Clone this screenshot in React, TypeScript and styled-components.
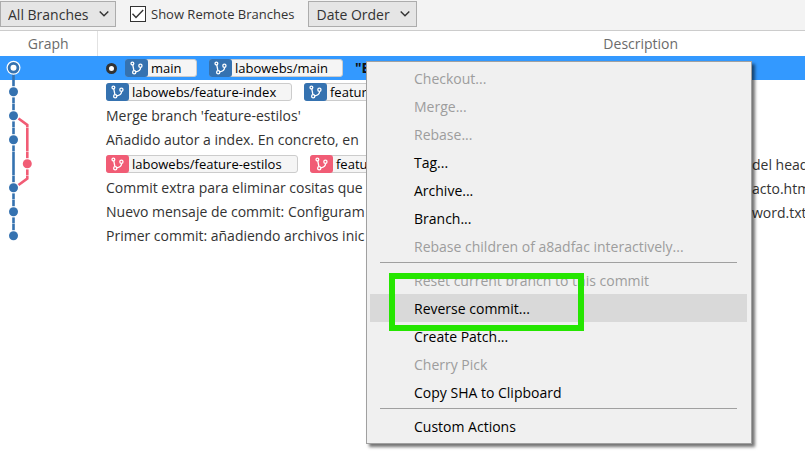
import React from "react";
import styled, { createGlobalStyle, css } from "styled-components";

const BLUE = "#3572b0";
const PINK = "#f15c75";

const GlobalStyle = createGlobalStyle`
  * { box-sizing: border-box; }
  body {
    margin: 0;
    background: #fff;
    color: #333;
    font: 14px/20px "Open Sans", "Noto Sans", sans-serif;
    overflow: hidden;
  }
  button, select, input { font: inherit; }
`;

const Page = styled.main`
  position: relative;
  min-height: 100vh;
`;

const Toolbar = styled.header`
  display: flex;
  align-items: center;
  height: 31px;
  padding-bottom: 2px;
  background: #f3f3f3;
  border-bottom: 1px solid #ccc;
`;

const SelectBox = styled.div<{ $width: number }>`
  position: relative;
  width: ${(p) => p.$width}px;
  height: 26px;

  svg {
    position: absolute;
    right: 7px;
    top: 9px;
    pointer-events: none;
  }
`;

const Select = styled.select`
  appearance: none;
  width: 100%;
  height: 100%;
  padding: 2px 0 0 7px;
  color: #333;
  background: #e5e5e5;
  border: 1px solid #acacac;
  border-radius: 0;
`;

const CheckLabel = styled.label`
  display: flex;
  align-items: center;
  gap: 5px;
  margin: 0 14px;
  font-size: 13px;
  white-space: nowrap;
`;

const CheckHolder = styled.span`
  display: grid;
  width: 16px;
  height: 16px;

  > * { grid-area: 1 / 1; }
  svg { pointer-events: none; visibility: hidden; }
  input:checked + svg { visibility: visible; }
`;

const Checkbox = styled.input`
  appearance: none;
  width: 16px;
  height: 16px;
  margin: 0;
  background: #fff;
  border: 1px solid #333;
`;

const LogViewport = styled.section`
  overflow: hidden;
`;

const Log = styled.table`
  width: 100%;
  min-width: 1184px;
  table-layout: fixed;
  border-collapse: collapse;
`;

const HeadCell = styled.th<{ $width?: number }>`
  width: ${(p) => (p.$width ? `${p.$width}px` : "auto")};
  height: 25px;
  padding: 0;
  color: #6b6b6b;
  font-weight: 400;
  line-height: 18px;
  text-align: center;

  & + & { border-left: 1px solid #e2e2e2; }
`;

const Row = styled.tr<{ $selected?: boolean }>`
  height: 24px;
  background: ${(p) => (p.$selected ? "#3399ff" : "#fff")};
`;

const Cell = styled.td`
  height: 24px;
  padding: 0;

  > svg { display: block; }
`;

const Description = styled.div`
  display: flex;
  height: 24px;
  padding-left: 9px;
  line-height: 26px;
  white-space: nowrap;
`;

const Lead = styled.div`
  display: flex;
  align-items: center;
  flex: none;
  gap: 12px;
  width: 646px;
  height: 24px;
`;

const Summary = styled.strong`
  color: #111;
`;

const Current = styled.span`
  flex: none;
  width: 11px;
  height: 11px;
  margin-right: -4px;
  border: 3px solid #333;
  border-radius: 50%;
  background: #fff;
`;

const Ref = styled.span<{ $color: string; $width: number }>`
  display: flex;
  align-items: center;
  flex: none;
  gap: 3px;
  width: ${(p) => p.$width}px;
  height: 18px;
  color: #000;
  font-size: 13px;
  line-height: 16px;
  background: #f5f5f5;
  border: 1px solid #ccc;
  border-radius: 3px;

  svg {
    flex: none;
    margin: -1px 0 -1px -1px;
    background: ${(p) => p.$color};
    border-radius: 3px;
  }
`;

const Menu = styled.div`
  position: absolute;
  top: 61px;
  left: 366px;
  width: 386px;
  padding: 2px 4px 3px 3px;
  background: #f0f0f0;
  border: 1px solid #a0a0a0;
  box-shadow: 3px 3px 3px rgba(0, 0, 0, 0.55);
`;

const MenuItem = styled.button<{ $active?: boolean }>`
  display: block;
  width: 100%;
  height: 28px;
  padding: 2px 0 0 44px;
  text-align: left;
  color: #000;
  background: none;
  border: 0;

  &:disabled { color: #9d9d9d; }
  ${(p) => p.$active && css`background: #d9d9d9;`}
`;

const Separator = styled.hr`
  height: 1px;
  margin: 2px 10px 3px;
  border: 0;
  background: #a0a0a0;
`;

const Highlight = styled.div`
  position: absolute;
  top: 273px;
  left: 389px;
  width: 195px;
  height: 58px;
  border: 6px solid #25e600;
  pointer-events: none;
`;

const Chevron = () => (
  <svg width="10" height="8" viewBox="0 0 10 8" fill="none" stroke="#333" strokeWidth="1.4">
    <path d="M0.7 1.5 5 5.8 9.3 1.5" />
  </svg>
);

const BranchIcon = () => (
  <svg width="23" height="18" viewBox="0 0 23 18" fill="none" stroke="#fff" strokeWidth="1.3">
    <circle cx="7.4" cy="4.6" r="1.4" />
    <circle cx="9.2" cy="13.2" r="1.6" />
    <circle cx="15.4" cy="6.8" r="1.6" />
    <path d="M7.8 6 8.9 11.6M15.6 8.4c0 2.4-1.6 3.8-4.9 4.4" />
  </svg>
);

type RefTag = { name: string; width: number };
type Commit = {
  refs?: RefTag[];
  color?: string;
  current?: boolean;
  summary?: string;
  message?: string;
  tail?: string;
  graph: React.ReactNode;
};

type Mark = { x?: number; color?: string };

const Line = ({ x = 13.5, from, to, color = BLUE }: Mark & { from: number; to: number }) => (
  <path d={`M${x} ${from}V${to}`} stroke={color} strokeWidth="2.6" />
);
const Dot = ({ x = 13.5, color = BLUE }: Mark) => <circle cx={x} cy="11.8" r="4.5" fill={color} />;

const Joined = ({ last = false }: { last?: boolean }) => (
  <>
    <Line from={0} to={6.2} />
    <Dot />
    {!last && <Line from={17.4} to={23.5} />}
  </>
);

const commits: Commit[] = [
  {
    current: true,
    refs: [{ name: "main", width: 72 }, { name: "labowebs/main", width: 134 }],
    summary: "\"Borrado",
    graph: (
      <>
        <Line from={17} to={24} />
        <circle cx="13.5" cy="11.8" r="7" fill="#fff" />
        <circle cx="13.5" cy="11.8" r="4.4" fill="#fff" stroke={BLUE} strokeWidth="2.8" />
      </>
    ),
  },
  {
    refs: [{ name: "labowebs/feature-index", width: 186 }, { name: "feature-index", width: 126 }],
    graph: <Joined />,
  },
  {
    message: "Merge branch 'feature-estilos'",
    graph: (
      <>
        <Joined />
        <path d="M18.5 14.5 27.3 21V23.5" fill="none" stroke={PINK} strokeWidth="2.6" />
      </>
    ),
  },
  {
    message: "Añadido autor a index. En concreto, en",
    graph: (
      <>
        <Joined />
        <Line x={27.3} from={0} to={23.5} color={PINK} />
      </>
    ),
  },
  {
    refs: [{ name: "labowebs/feature-estilos", width: 192 }, { name: "feature-estilos", width: 132 }],
    color: PINK,
    tail: "del header",
    graph: (
      <>
        <Line from={0} to={23.5} />
        <Line x={27.3} from={0} to={6.2} color={PINK} />
        <Dot x={27.3} color={PINK} />
        <Line x={27.3} from={17.4} to={23.5} color={PINK} />
      </>
    ),
  },
  {
    message: "Commit extra para eliminar cositas que",
    tail: "acto.html",
    graph: (
      <>
        <Joined />
        <path d="M27.3 0V2.5L18.5 9" fill="none" stroke={PINK} strokeWidth="2.6" />
      </>
    ),
  },
  { message: "Nuevo mensaje de commit: Configuram", tail: "word.txt", graph: <Joined /> },
  { message: "Primer commit: añadiendo archivos inic", graph: <Joined last /> },
];

type Entry = { label: string; disabled?: boolean; active?: boolean } | null;
const entries: Entry[] = [
  { label: "Checkout...", disabled: true },
  { label: "Merge...", disabled: true },
  { label: "Rebase...", disabled: true },
  { label: "Tag..." },
  { label: "Archive..." },
  { label: "Branch..." },
  { label: "Rebase children of a8adfac interactively...", disabled: true },
  null,
  { label: "Reset current branch to this commit", disabled: true },
  { label: "Reverse commit...", active: true },
  { label: "Create Patch..." },
  { label: "Cherry Pick", disabled: true },
  { label: "Copy SHA to Clipboard" },
  null,
  { label: "Custom Actions" },
];

export default function App() {
  return (
    <Page>
      <GlobalStyle />
      <Toolbar>
        <SelectBox $width={116}>
          <Select aria-label="Branches">
            <option>All Branches</option>
          </Select>
          <Chevron />
        </SelectBox>
        <CheckLabel>
          <CheckHolder>
            <Checkbox type="checkbox" defaultChecked />
            <svg width="16" height="16" viewBox="0 0 16 16" fill="none" stroke="#333" strokeWidth="1.4">
              <path d="M2.5 7.8 6 11.4 13.2 4" />
            </svg>
          </CheckHolder>
          Show Remote Branches
        </CheckLabel>
        <SelectBox $width={109}>
          <Select aria-label="Sort order">
            <option>Date Order</option>
          </Select>
          <Chevron />
        </SelectBox>
      </Toolbar>
      <LogViewport>
        <Log>
          <thead>
            <tr>
              <HeadCell $width={97}>Graph</HeadCell>
              <HeadCell>Description</HeadCell>
            </tr>
          </thead>
          <tbody>
            {commits.map((c, i) => (
              <Row key={i} $selected={c.current}>
                <Cell>
                  <svg width="40" height="24" viewBox="0 0 40 24">{c.graph}</svg>
                </Cell>
                <Cell>
                  <Description>
                    <Lead>
                      {c.current && <Current />}
                      {c.refs?.map((r) => (
                        <Ref key={r.name} $color={c.color ?? BLUE} $width={r.width}>
                          <BranchIcon />
                          {r.name}
                        </Ref>
                      ))}
                      {c.summary && <Summary>{c.summary}</Summary>}
                      {c.message}
                    </Lead>
                    {c.tail}
                  </Description>
                </Cell>
              </Row>
            ))}
          </tbody>
        </Log>
      </LogViewport>
      <Menu role="menu">
        {entries.map((e, i) =>
          e ? (
            <MenuItem key={i} role="menuitem" disabled={e.disabled} $active={e.active}>
              {e.label}
            </MenuItem>
          ) : (
            <Separator key={i} />
          ),
        )}
      </Menu>
      <Highlight />
    </Page>
  );
}
